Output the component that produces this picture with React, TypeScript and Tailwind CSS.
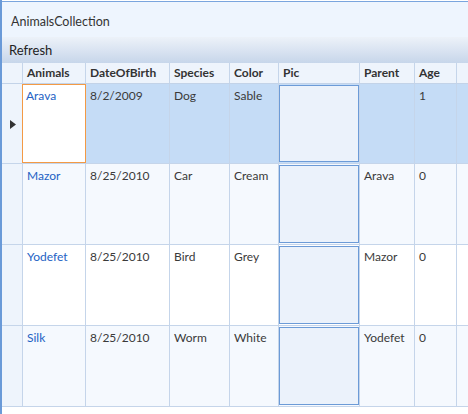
import React from 'react';

type Row = {
  name: string;
  dob: string;
  species: string;
  color: string;
  parent: string;
  age: string;
};

const rows: Row[] = [
  { name: 'Arava', dob: '8/2/2009', species: 'Dog', color: 'Sable', parent: '', age: '1' },
  { name: 'Mazor', dob: '8/25/2010', species: 'Car', color: 'Cream', parent: 'Arava', age: '0' },
  { name: 'Yodefet', dob: '8/25/2010', species: 'Bird', color: 'Grey', parent: 'Mazor', age: '0' },
  { name: 'Silk', dob: '8/25/2010', species: 'Worm', color: 'White', parent: 'Yodefet', age: '0' },
];

const headers = ['Animals', 'DateOfBirth', 'Species', 'Color', 'Pic', 'Parent', 'Age'];
const widths = ['w-[63px]', 'w-[84px]', 'w-[60px]', 'w-[49px]', 'w-[81px]', 'w-[55px]', 'w-[42px]'];

const font = { fontFamily: '"Segoe UI", Lato, "Liberation Sans", sans-serif' };

const App: React.FC = () => {
  return (
    <div className="w-[468px] h-[414px] bg-white overflow-hidden text-[12px] text-[#3a3a3a]" style={font}>
      <div className="h-full border-l-2 border-[#6a9ad8] flex flex-col pt-[1px]">
        <div className="shrink-0 border-t border-[#7aa5de] bg-[#eef5fe] h-[36px] flex items-center pl-[9px] pt-[5px] text-[12.5px] text-[#333]">
          AnimalsCollection
        </div>
        <div className="shrink-0 h-[26px] bg-gradient-to-b from-[#edf2f9] to-[#c7d6ea] flex items-center pl-[7px] pt-[2px] text-[13px] text-[#222]">
          Refresh
        </div>

        {/* header row */}
        <div className="shrink-0 flex h-[21px] bg-[#eef4fc] border-b border-[#c3d3e8]">
          <div className="w-[21px] shrink-0 border-r border-[#c5d5ea]" />
          {headers.map((h, i) => (
            <div
              key={h}
              className={`${widths[i]} shrink-0 border-r border-[#c5d5ea] font-bold text-[#333] pl-[4px] flex items-center`}
            >
              {h}
            </div>
          ))}
          <div className="flex-1" />
        </div>

        {rows.map((r, idx) => {
          const selected = idx === 0;
          const bg = selected ? 'bg-[#c5dcf6]' : idx % 2 === 1 ? 'bg-[#f5f9fe]' : 'bg-white';
          const cell = `shrink-0 border-r border-[#c5d5ea] pl-[4px] pt-[3px]`;
          return (
            <div
              key={r.name}
              className={`flex ${selected ? 'h-[80px]' : 'h-[81px]'} shrink-0 border-b border-[#c5d5ea] ${bg}`}
            >
              <div className="w-[21px] shrink-0 border-r border-[#c5d5ea] bg-[#eef4fc] flex items-center justify-center">
                {selected && (
                  <svg width="6" height="9" viewBox="0 0 6 9" className="ml-[1px] mt-[2px]">
                    <path d="M0 0 L6 4.5 L0 9 Z" fill="#333" />
                  </svg>
                )}
              </div>
              <div
                className={`${widths[0]} shrink-0 border-r border-[#c5d5ea] text-[#2462c4] ${
                  selected ? 'bg-white border border-[#f39a45] pl-[3px] pt-[2px] -ml-[1px] w-[64px]' : 'pl-[4px] pt-[3px]'
                }`}
              >
                {r.name}
              </div>
              <div className={`${widths[1]} ${cell}`}>{r.dob}</div>
              <div className={`${widths[2]} ${cell}`}>{r.species}</div>
              <div className={`${widths[3]} ${cell}`}>{r.color}</div>
              <div className={`${widths[4]} shrink-0 border-r border-[#c5d5ea] py-[1px]`}>
                <div className="h-full bg-[#ebf2fb] border border-[#6c9bd7]" />
              </div>
              <div className={`${widths[5]} ${cell}`}>{r.parent}</div>
              <div className={`${widths[6]} ${cell}`}>{r.age}</div>
              <div className="flex-1" />
            </div>
          );
        })}
        <div className="flex-1 bg-white" />
      </div>
    </div>
  );
};

export default App;
